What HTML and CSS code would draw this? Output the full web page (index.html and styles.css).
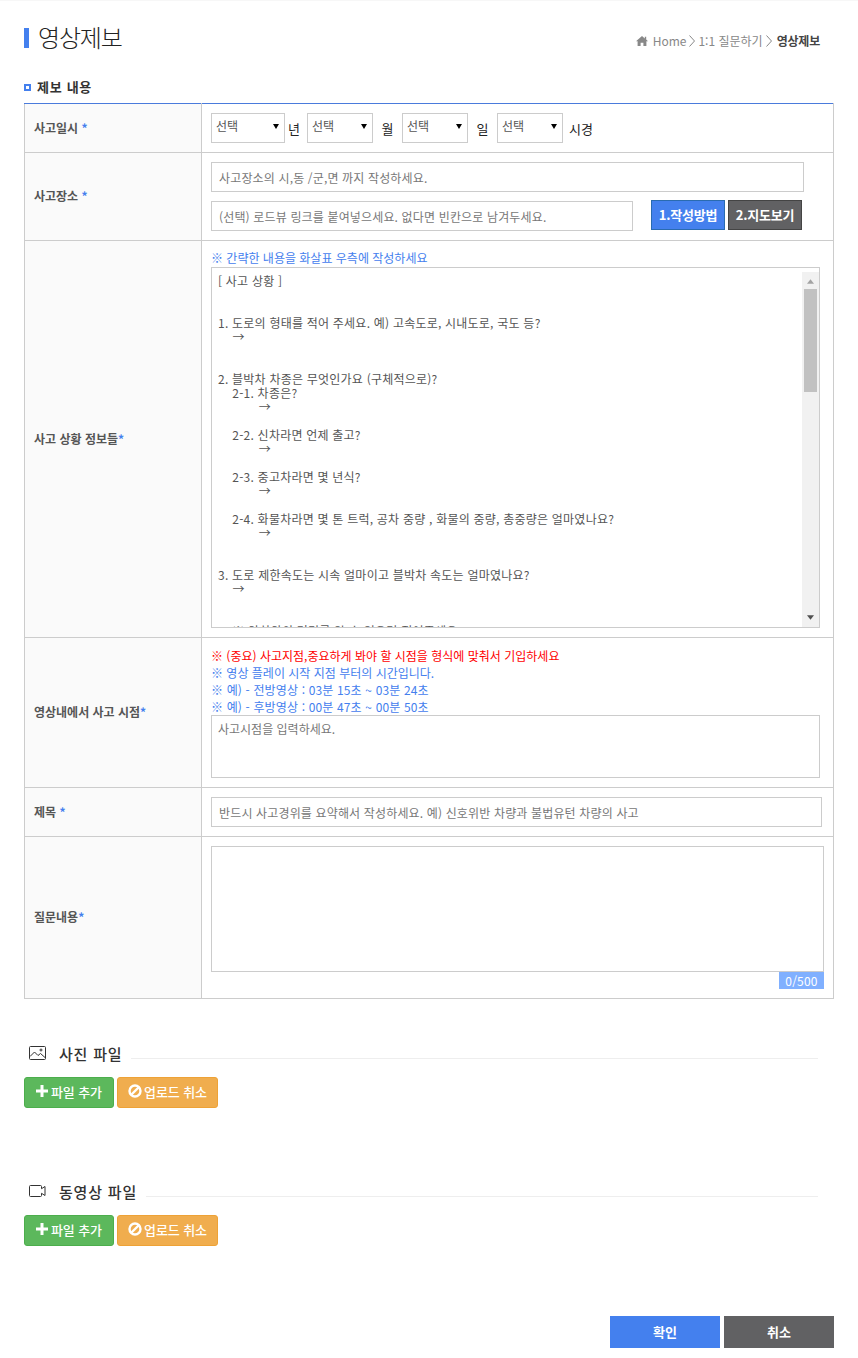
FILE: index.html
```html
<!DOCTYPE html>
<html lang="ko">
<head>
<meta charset="utf-8">
<title>영상제보</title>
<link rel="stylesheet" href="styles.css">
</head>
<body>
<div class="page">
  <header class="head">
    <h1 class="title">영상제보</h1>
    <nav class="crumb">
      <svg class="home" viewBox="0 0 12 10"><path d="M6 0 0 5.2h1.6V10h3V6.8h2.8V10h3V5.2H12L10.2 3.6V.8H8.8v1.6z"/></svg>
      <span>Home</span>
      <svg class="chev" viewBox="0 0 6 12"><path d="M.5.5 5.5 6 .5 11.5"/></svg>
      <span>1:1 질문하기</span>
      <svg class="chev" viewBox="0 0 6 12"><path d="M.5.5 5.5 6 .5 11.5"/></svg>
      <b>영상제보</b>
    </nav>
  </header>
  <h2 class="sub"><i class="sq"></i>제보 내용</h2>
  <table class="form">
    <colgroup><col class="c1"><col></colgroup>
    <tr class="r1">
      <th>사고일시 <em>*</em></th>
      <td>
        <div class="dates">
          <select class="s1"><option>선택</option></select><span class="u1">년</span>
          <select class="s2"><option>선택</option></select><span class="u2">월</span>
          <select class="s2"><option>선택</option></select><span class="u2">일</span>
          <select class="s2"><option>선택</option></select><span class="u3">시경</span>
        </div>
      </td>
    </tr>
    <tr class="r2">
      <th>사고장소 <em>*</em></th>
      <td>
        <input class="in in-a" placeholder="사고장소의 시,동 /군,면 까지 작성하세요.">
        <div class="link-row">
          <input class="in in-b" placeholder="(선택) 로드뷰 링크를 붙여넣으세요. 없다면 빈칸으로 남겨두세요.">
          <a class="btn-sq blue">1.작성방법</a>
          <a class="btn-sq dark">2.지도보기</a>
        </div>
      </td>
    </tr>
    <tr class="r3">
      <th>사고 상황 정보들<em>*</em></th>
      <td>
        <p class="note first">※ 간략한 내용을 화살표 우측에 작성하세요</p>
        <div class="ta-wrap">
        <textarea class="ta ta-main" readonly>[ 사고 상황 ]


1. 도로의 형태를 적어 주세요. 예) 고속도로, 시내도로, 국도 등?
     →


2. 블박차 차종은 무엇인가요 (구체적으로)?
    2-1. 차종은?
              →

    2-2. 신차라면 언제 출고?
              →

    2-3. 중고차라면 몇 년식?
              →

    2-4. 화물차라면 몇 톤 트럭, 공차 중량 , 화물의 중량, 총중량은 얼마였나요?
              →


3. 도로 제한속도는 시속 얼마이고 블박차 속도는 얼마였나요?
     →


    ※ 앞차와의 거리를 알 수 있으면 적어주세요</textarea>
          <div class="sb">
            <svg class="sb-up" viewBox="0 0 8 5"><path d="M4 0 8 5H0z"/></svg>
            <i class="sb-thumb"></i>
            <svg class="sb-down" viewBox="0 0 8 5"><path d="M0 0h8L4 5z"/></svg>
          </div>
        </div>
      </td>
    </tr>
    <tr class="r4">
      <th>영상내에서 사고 시점<em>*</em></th>
      <td>
        <p class="note red">※ (중요) 사고지점,중요하게 봐야 할 시점을 형식에 맞춰서 기입하세요</p>
        <p class="note">※ 영상 플레이 시작 지점 부터의 시간입니다.</p>
        <p class="note wide">※ 예) - 전방영상 : 03분 15초 ~ 03분 24초</p>
        <p class="note wide">※ 예) - 후방영상 : 00분 47초 ~ 00분 50초</p>
        <textarea class="ta ta-time" placeholder="사고시점을 입력하세요."></textarea>
      </td>
    </tr>
    <tr class="r5">
      <th>제목 <em>*</em></th>
      <td><input class="in in-c" placeholder="반드시 사고경위를 요약해서 작성하세요. 예) 신호위반 차량과 불법유턴 차량의 사고"></td>
    </tr>
    <tr class="r6">
      <th>질문내용<em>*</em></th>
      <td>
        <textarea class="ta ta-q"></textarea>
        <div class="count-row"><span class="count">0/500</span></div>
      </td>
    </tr>
  </table>

  <section class="upload first-up">
    <div class="up-title">
      <svg class="up-ico" viewBox="0 0 17 14"><rect x=".5" y=".5" width="16" height="13" rx="1"/><path d="M1 10.5 5.5 6l3.5 3.5 2.5-2 4.5 4"/><circle cx="12" cy="4" r="1"/></svg>
      <span>사진 파일</span><i class="rule"></i>
    </div>
    <div class="up-btns">
      <a class="fbtn green"><svg class="fi" viewBox="0 0 12 12"><path d="M4.5 0h3v4.5H12v3H7.5V12h-3V7.5H0v-3h4.5z"/></svg>파일 추가</a>
      <a class="fbtn orange"><svg class="fi ban" viewBox="0 0 14 14"><circle cx="7" cy="7" r="5.5"/><path d="M3 11 11 3"/></svg>업로드 취소</a>
    </div>
  </section>

  <section class="upload second-up">
    <div class="up-title">
      <svg class="up-ico" viewBox="0 0 17 14"><path d="M1.5 1.5h10a1 1 0 0 1 1 1v2.2l3.5-2.2v9l-3.5-2.2v2.2a1 1 0 0 1-1 1h-10a1 1 0 0 1-1-1v-9a1 1 0 0 1 1-1z"/></svg>
      <span>동영상 파일</span><i class="rule"></i>
    </div>
    <div class="up-btns">
      <a class="fbtn green"><svg class="fi" viewBox="0 0 12 12"><path d="M4.5 0h3v4.5H12v3H7.5V12h-3V7.5H0v-3h4.5z"/></svg>파일 추가</a>
      <a class="fbtn orange"><svg class="fi ban" viewBox="0 0 14 14"><circle cx="7" cy="7" r="5.5"/><path d="M3 11 11 3"/></svg>업로드 취소</a>
    </div>
  </section>

  <div class="actions">
    <a class="act blue">확인</a>
    <a class="act dark">취소</a>
  </div>
</div>
</body>
</html>
```
FILE: styles.css
```css
* { box-sizing: border-box; }
html, body { margin: 0; padding: 0; background: #fff; }
body {
  font-family: "Noto Sans CJK KR", "Noto Sans", sans-serif;
  font-size: 12px;
  color: #555;
}
.page {
  height: 1358px;
  padding: 0 24px;
  border-top: 1px solid #f7f7f7;
  overflow: hidden;
}
.head {
  height: 74px;
  display: flex;
  justify-content: space-between;
  padding-top: 27px;
}
.title {
  margin: 0;
  height: 20px;
  border-left: 5px solid #4480ee;
  padding-left: 9px;
  font-size: 24px;
  font-weight: 300;
  line-height: 18px;
  color: #222;
  letter-spacing: -1.2px;
}
.crumb {
  display: flex;
  align-items: center;
  height: 24px;
  margin: 0 14px 0 0;
  padding-top: 1px;
  font-size: 12px;
  color: #888;
}
.crumb b { color: #444; font-weight: 700; margin-left: 2px; letter-spacing: -.2px; }
.home { width: 12px; height: 10px; fill: #888; margin-right: 5px; }
.chev { width: 6px; height: 12px; fill: none; stroke: #888; stroke-width: 1; margin: 0 3px; }
.sub {
  margin: 0;
  height: 28px;
  display: flex;
  align-items: flex-start;
  font-size: 13px;
  font-weight: 700;
  line-height: 23px;
  color: #333;
  letter-spacing: .7px;
}
.sq {
  width: 7px;
  height: 7px;
  border: 2px solid #4480ee;
  margin: 9px 6px 0 0;
}
.form {
  width: 810px;
  border-collapse: collapse;
  table-layout: fixed;
  border-top: 1px solid #4a7bdc;
}
.c1 { width: 177px; }
.form th, .form td { border: 1px solid #ccc; padding: 0; }
.form tr:first-child th, .form tr:first-child td { border-top: 1px solid #4a7bdc; }
.form th {
  background: #fafafa;
  text-align: left;
  font-size: 12px;
  font-weight: 700;
  color: #555;
  padding: 0 0 2px 9px;
}
.form em { font-style: normal; color: #4480ee; }
.form td { padding-left: 9px; vertical-align: top; }
.r1 { height: 49px; }
.r2 { height: 88px; }
.r3 { height: 397px; }
.r4 { height: 150px; }
.r5 { height: 49px; }
.r6 { height: 162px; }
.dates { display: flex; align-items: center; padding-top: 9px; font-size: 13px; color: #222; }
select {
  appearance: none;
  -webkit-appearance: none;
  height: 30px;
  border: 1px solid #ccc;
  background: #fff url("data:image/svg+xml,%3Csvg xmlns='http://www.w3.org/2000/svg' viewBox='0 0 6 5'%3E%3Cpath d='M0 0h6L3 5z'/%3E%3C/svg%3E") no-repeat right 5px top 10px / 6px 5px;
  font-family: inherit;
  font-size: 12px;
  color: #555;
  padding: 0 0 5px 4px;
  border-radius: 0;
}
.s1 { width: 74px; }
.s2 { width: 66px; }
.u1 { width: 22px; padding-left: 3px; }
.u2 { width: 29px; text-align: center; }
.u3 { margin-left: 6px; }
.in {
  display: block;
  height: 30px;
  border: 1px solid #ccc;
  padding: 0 7px;
  font-family: inherit;
  font-size: 12px;
  color: #555;
  border-radius: 0;
  outline: 0;
  letter-spacing: .15px;
}
.in::placeholder, .ta::placeholder { color: #777; opacity: 1; }
.in-a { width: 593px; margin-top: 9px; }
.link-row { display: flex; align-items: flex-start; margin-top: 9px; }
.in-b { width: 422px; }
.btn-sq {
  width: 74px;
  height: 30px;
  margin-top: -1px;
  font-size: 13px;
  font-weight: 700;
  line-height: 28px;
  text-align: center;
  color: #fff;
  border: 1px solid #2a6bb0;
  letter-spacing: -.2px;
}
.btn-sq.blue { background: #4480ee; margin-left: 18px; }
.btn-sq.dark { background: #616163; border-color: #444; margin-left: 3px; }
.note {
  margin: 0;
  height: 17px;
  font-size: 12px;
  line-height: 17px;
  color: #4480ee;
}
.note.wide { letter-spacing: .15px; }
.note.first { margin-top: 8px; height: 18px; }
.note.red { color: #f00; margin-top: 9px; }
.ta {
  display: block;
  border: 1px solid #ccc;
  font-family: inherit;
  font-size: 12px;
  color: #555;
  outline: 0;
  resize: none;
  padding: 5px 6px;
  border-radius: 0;
}
.ta-wrap { position: relative; width: 609px; }
.ta-main {
  width: 609px;
  height: 361px;
  line-height: 14px;
  padding-top: 6px;
  overflow: hidden;
  white-space: pre;
  letter-spacing: .22px;
}
.sb {
  position: absolute;
  top: 5px;
  right: 1px;
  bottom: 1px;
  width: 17px;
  background: #f1f1f1;
}
.sb-up, .sb-down { position: absolute; left: 5px; width: 7px; height: 5px; }
.sb-up { top: 7px; fill: #a3a3a3; }
.sb-down { bottom: 7px; fill: #505050; }
.sb-thumb {
  position: absolute;
  top: 17px;
  left: 2px;
  width: 13px;
  height: 103px;
  background: #c1c1c1;
}
.ta-time { width: 609px; height: 63px; line-height: 17px; padding: 4px 6px; }
.in-c { width: 611px; margin-top: 9px; }
.ta-q { width: 613px; height: 126px; margin-top: 9px; }
.count-row { display: flex; justify-content: flex-end; width: 613px; }
.count {
  width: 45px;
  height: 17px;
  background: #80b0ff;
  color: #fff;
  font-size: 12px;
  line-height: 17px;
  text-align: center;
  letter-spacing: .2px;
}
.upload { padding-left: 0; }
.first-up { margin-top: 44px; height: 138px; }
.up-title {
  display: flex;
  align-items: center;
  height: 20px;
  padding-left: 5px;
  width: 794px;
  font-size: 15px;
  font-weight: 500;
  color: #333;
  letter-spacing: .8px;
}
.up-ico { width: 17px; height: 14px; fill: none; stroke: #333; stroke-width: 1; margin-right: 13px; }
.rule { flex: 1; height: 1px; background: #eee; margin-left: 9px; margin-top: 11px; }
.up-btns { display: flex; gap: 3px; margin-top: 14px; }
.fbtn {
  display: flex;
  align-items: center;
  justify-content: center;
  height: 31px;
  padding-bottom: 3px;
  border-radius: 3px;
  color: #fff;
  font-size: 13px;
  font-weight: 500;
  border: 1px solid;
  letter-spacing: -.1px;
}
.green { background: #5cb85c; border-color: #4cae4c; width: 90px; }
.orange { background: #f0ad4e; border-color: #eea236; width: 101px; }
.fi { width: 12px; height: 12px; fill: #fff; margin-right: 3px; }
.fi.ban { width: 14px; height: 14px; fill: none; stroke: #fff; stroke-width: 2.4; margin-right: 2px; }
.actions {
  display: flex;
  justify-content: flex-end;
  gap: 4px;
  margin-top: 70px;
}
.act {
  width: 110px;
  height: 32px;
  font-size: 13px;
  font-weight: 700;
  line-height: 32px;
  text-align: center;
  color: #fff;
}
.act.blue { background: #4480ee; }
.act.dark { background: #616163; }
```
